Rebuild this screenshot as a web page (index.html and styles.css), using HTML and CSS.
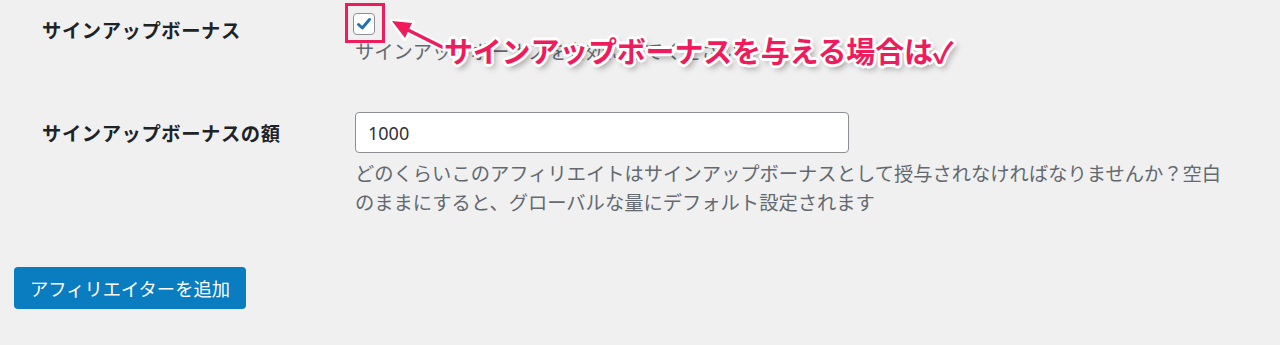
FILE: index.html
```html
<!DOCTYPE html>
<html lang="ja">
<head>
  <meta charset="UTF-8" />
  <meta name="viewport" content="width=device-width, initial-scale=1" />
  <title>アフィリエイターを追加</title>
  <link rel="stylesheet" href="styles.css">
</head>
<body>
  <div class="wrap">
    <div class="form-table">
      <div class="form-row row-bonus">
        <div class="row-label">サインアップボーナス</div>
        <div class="row-field">
          <span class="checkbox">
            <svg viewBox="0 0 20 20" width="20" height="20"><path d="M4.5 10.5 L8.3 14 L15.5 5.5" fill="none" stroke="#2271b1" stroke-width="3" stroke-linecap="round" stroke-linejoin="round"/></svg>
          </span>
          <p class="description">サインアップボーナスを有効にしてください</p>
        </div>
      </div>
      <div class="form-row row-amount">
        <div class="row-label">サインアップボーナスの額</div>
        <div class="row-field">
          <input type="text" class="regular-text" value="1000">
          <p class="description wide">どのくらいこのアフィリエイトはサインアップボーナスとして授与されなければなりませんか？空白のままにすると、グローバルな量にデフォルト設定されます</p>
        </div>
      </div>
    </div>
    <div class="submit">
      <button class="button-primary">アフィリエイターを追加</button>
    </div>
  </div>

  <!-- annotation layer -->
  <div class="note-box"></div>
  <svg class="note-arrow" width="70" height="40" viewBox="0 0 70 40">
    <path d="M56 33 L14 12" stroke="#fff" stroke-width="7" stroke-linecap="round"/>
    <path d="M6 7 L27 8 L19 25 Z" fill="#fff" stroke="#fff" stroke-width="4" stroke-linejoin="round"/>
    <path d="M56 33 L16 13" stroke="#ee1c5c" stroke-width="3.5" stroke-linecap="round"/>
    <path d="M6 7 L26 9 L19 24 Z" fill="#ee1c5c"/>
  </svg>
  <div class="note-text">サインアップボーナスを与える場合は✓</div>
</body>
</html>
```

FILE: styles.css
```css
body {
  margin: 0;
  background: #f0f0f1;
  color: #1d2327;
  font-family: "Noto Sans CJK JP", "Noto Sans", sans-serif;
  position: relative;
  height: 345px;
  overflow: hidden;
}
.wrap {
  padding: 0 14px;
}
.form-row {
  display: grid;
  grid-template-columns: 313px 1fr;
  padding-left: 28px;
}
.row-label {
  font-weight: bold;
  font-size: 19.3px;
  letter-spacing: 0.6px;
}
.row-bonus {
  padding-top: 13px;
}
.row-bonus .row-label {
  padding-top: 3px;
}
.row-amount {
  padding-top: 46px;
}
.row-amount .row-label {
  padding-top: 7px;
}
.checkbox {
  display: flex;
  align-items: center;
  justify-content: center;
  width: 20px;
  height: 20px;
  margin-left: -2px;
  border: 1px solid #8c8f94;
  border-radius: 4px;
  background: #fff;
}
.description {
  margin: 0;
  color: #646970;
  font-size: 19.3px;
  line-height: 29px;
}
.row-bonus .description {
  margin-top: 2px;
}
.description.wide {
  max-width: 885px;
  margin-top: 6px;
}
.regular-text {
  display: block;
  box-sizing: border-box;
  width: 494px;
  height: 41px;
  padding: 0 12px;
  border: 1px solid #8c8f94;
  border-radius: 4px;
  background: #fff;
  color: #2c3338;
  font-family: "Noto Sans", sans-serif;
  font-size: 18px;
}
.submit {
  padding-top: 50px;
}
.button-primary {
  height: 42px;
  width: 232px;
  padding: 0;
  border: none;
  border-radius: 4px;
  background: #0a7cc0;
  color: #fff;
  font-family: "Noto Sans CJK JP", sans-serif;
  font-size: 18.3px;
  cursor: pointer;
}

.note-box {
  position: absolute;
  left: 345px;
  top: 3px;
  width: 34px;
  height: 34px;
  border: 3px solid #ee1c5c;
}
.note-arrow {
  position: absolute;
  left: 386px;
  top: 14px;
}
.note-text {
  position: absolute;
  left: 444px;
  top: 29px;
  color: #ee1c5c;
  font-weight: bold;
  font-size: 29px;
  line-height: 42px;
  letter-spacing: -0.2px;
  text-shadow:
    3px 0 0 #fff, -3px 0 0 #fff, 0 3px 0 #fff, 0 -3px 0 #fff,
    2px 2px 0 #fff, -2px -2px 0 #fff, 2px -2px 0 #fff, -2px 2px 0 #fff,
    3px 4px 6px rgba(0,0,0,0.45);
}
```
